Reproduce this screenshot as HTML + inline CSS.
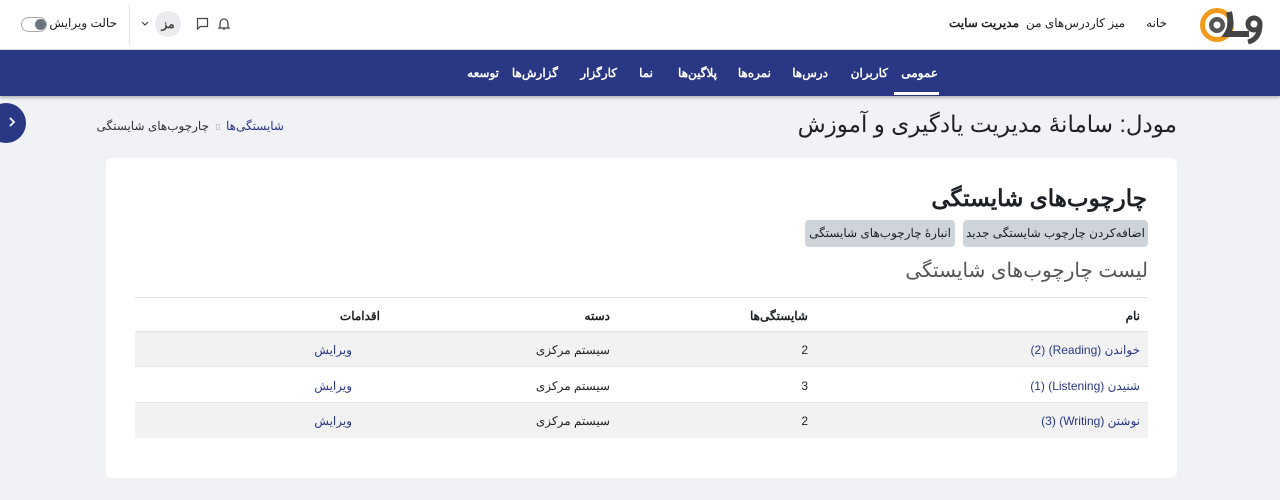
<!DOCTYPE html>
<html lang="fa" dir="rtl"><head><meta charset="utf-8">
<style>
*{box-sizing:border-box;margin:0;padding:0}
body{width:1280px;height:500px;overflow:hidden;background:#f1f2f6;font-family:"Liberation Sans","Noto Sans CJK SC",sans-serif;color:#1d2125;position:relative}
.a{position:absolute;white-space:nowrap}
#top{position:absolute;left:0;top:0;width:1280px;height:50px;background:#fff;border-bottom:1px solid #e3e3e3}
#band{position:absolute;left:0;top:50px;width:1280px;height:46px;background:#2a3784;box-shadow:0 2px 3px rgba(0,0,0,.25)}
.nav{color:#fff;font-size:12px;font-weight:bold;top:66px}
.card{position:absolute;left:106px;top:158px;width:1071px;height:320px;background:#fff;border-radius:6px}
.btn{position:absolute;top:220px;height:27px;background:#ced4da;border-radius:4px;font-size:12px;line-height:27px;text-align:center;color:#1d2125}
.row{position:absolute;left:135px;width:1013px;height:35px;font-size:12px}
.row span{position:absolute;top:11px}
.lnk{color:#2a3784}
.tn{position:absolute;top:16px;font-size:12px;white-space:nowrap}
</style></head><body>
<div id="top"></div>
<svg class="a" style="left:1199px;top:6px" width="64" height="38" viewBox="0 0 64 38"><circle cx="18" cy="19" r="17" fill="#f29a1c"/><circle cx="18" cy="19" r="12" fill="#fff"/><circle cx="18" cy="19" r="8" fill="#555"/><circle cx="18" cy="19" r="3.5" fill="#fff"/><path d="M30 6c2 8 2 16-2 22h22" stroke="#444" stroke-width="6" fill="none"/><circle cx="55" cy="18" r="6" stroke="#444" stroke-width="5" fill="none"/><path d="M61 18c0 10-4 16-12 18" stroke="#444" stroke-width="5" fill="none"/></svg>
<div class="tn" style="right:113px">خانه</div>
<div class="tn" style="right:155px">میز کار</div>
<div class="tn" style="right:190px">درس‌های من</div>
<div class="tn" style="right:261px;font-weight:bold">مدیریت سایت</div>
<svg class="a" style="left:218px;top:17px" width="12" height="13" viewBox="0 0 12 13"><path d="M2 10V6a4 4 0 0 1 8 0v4l1 1H1zM5 12h2" stroke="#444" stroke-width="1.2" fill="none"/></svg>
<svg class="a" style="left:196px;top:17px" width="13" height="13" viewBox="0 0 13 13"><path d="M1.5 1.5h10v8h-7l-3 2.5z" stroke="#444" stroke-width="1.2" fill="none"/></svg>
<div class="a" style="left:155px;top:11px;width:26px;height:26px;border-radius:50%;background:#e9ebee;font-size:12px;text-align:center;line-height:26px;font-weight:bold;color:#444">مز</div>
<svg class="a" style="left:141px;top:21px" width="8" height="6" viewBox="0 0 8 6"><path d="M1 1l3 3 3-3" stroke="#444" stroke-width="1.2" fill="none"/></svg>
<div class="a" style="left:129px;top:5px;width:1px;height:40px;background:#e3e3e3"></div>
<div class="a" style="left:21px;top:17px;width:26px;height:15px;border:1px solid #aaa;border-radius:8px"></div>
<div class="a" style="left:35px;top:19px;width:11px;height:11px;border-radius:50%;background:#6a737b"></div>
<div class="a" style="right:1163px;top:16px;font-size:12px">حالت ویرایش</div>
<div id="band"></div>
<div class="a nav" style="right:342px">عمومی</div>
<div class="a" style="left:894px;top:92px;width:45px;height:3px;background:#fff"></div>
<div class="a nav" style="right:392px">کاربران</div>
<div class="a nav" style="right:452px">درس‌ها</div>
<div class="a nav" style="right:509px">نمره‌ها</div>
<div class="a nav" style="right:563px">پلاگین‌ها</div>
<div class="a nav" style="right:627px">نما</div>
<div class="a nav" style="right:663px">کارگزار</div>
<div class="a nav" style="right:722px">گزارش‌ها</div>
<div class="a nav" style="right:781px">توسعه</div>
<div class="a" style="left:-14px;top:103px;width:40px;height:40px;border-radius:50%;background:#2a3784"></div>
<svg class="a" style="left:8px;top:116px" width="8" height="12" viewBox="0 0 8 12"><path d="M2 2l4 4-4 4" stroke="#fff" stroke-width="1.8" fill="none"/></svg>
<div class="a" style="right:103px;top:111px;font-size:23px">مودل: سامانهٔ مدیریت یادگیری و آموزش</div>
<div class="a lnk" style="right:996px;top:119px;font-size:12px">شایستگی‌ها</div>
<div class="a" style="left:216px;top:124px;width:4px;height:6px;border:1px solid #ccc"></div>
<div class="a" style="right:1071px;top:119px;font-size:12px;color:#333">چارچوب‌های شایستگی</div>
<div class="card"></div>
<div class="a" style="right:133px;top:185px;font-size:23px;font-weight:bold">چارچوب‌های شایستگی</div>
<div class="btn" style="left:963px;width:185px">اضافه‌کردن چارچوب شایستگی جدید</div>
<div class="btn" style="left:805px;width:150px">انبارهٔ چارچوب‌های شایستگی</div>
<div class="a" style="right:132px;top:258px;font-size:20px;color:#555">لیست چارچوب‌های شایستگی</div>
<div class="row" style="top:297px;border-top:1px solid #dee2e6;border-bottom:1px solid #dee2e6;font-weight:bold"><span style="right:8px">نام</span><span style="right:340px">شایستگی‌ها</span><span style="right:538px">دسته</span><span style="right:768px">اقدامات</span></div>
<div class="row" style="top:332px;background:#f2f2f2;border-bottom:1px solid #e6e6e6"><span class="lnk" style="right:8px">خواندن (Reading) (2)</span><span style="right:340px">2</span><span style="right:538px">سیستم مرکزی</span><span class="lnk" style="right:796px">ویرایش</span></div>
<div class="row" style="top:368px;border-bottom:1px solid #e6e6e6"><span class="lnk" style="right:8px">شنیدن (Listening) (1)</span><span style="right:340px">3</span><span style="right:538px">سیستم مرکزی</span><span class="lnk" style="right:796px">ویرایش</span></div>
<div class="row" style="top:403px;background:#f2f2f2"><span class="lnk" style="right:8px">نوشتن (Writing) (3)</span><span style="right:340px">2</span><span style="right:538px">سیستم مرکزی</span><span class="lnk" style="right:796px">ویرایش</span></div>
</body></html>
